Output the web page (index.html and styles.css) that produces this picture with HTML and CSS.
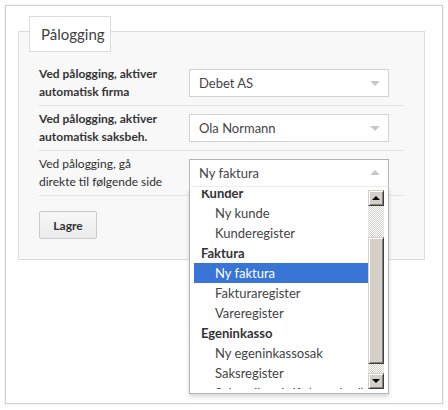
FILE: index.html
```html
<!DOCTYPE html>
<html lang="no">
<head>
<meta charset="utf-8">
<title>Pålogging</title>
<link rel="stylesheet" href="styles.css">
</head>
<body>
<div class="panel">
  <div class="fieldset">
    <div class="legend">Pålogging</div>
    <div class="rows">
      <div class="row">
        <div class="label bold">Ved pålogging, aktiver<br>automatisk firma</div>
        <div class="select"><span class="value">Debet AS</span><i class="arrow down"></i></div>
      </div>
      <div class="row">
        <div class="label bold">Ved pålogging, aktiver<br>automatisk saksbeh.</div>
        <div class="select"><span class="value">Ola Normann</span><i class="arrow down"></i></div>
      </div>
      <div class="row">
        <div class="label">Ved pålogging, gå<br>direkte til følgende side</div>
        <div class="select-wrap">
          <div class="select open"><span class="value">Ny faktura</span><i class="arrow up"></i></div>
          <div class="drop">
            <div class="results">
              <div class="viewport">
                <ul class="list">
                  <li class="group">Kunder</li>
                  <li class="option">Ny kunde</li>
                  <li class="option">Kunderegister</li>
                  <li class="group">Faktura</li>
                  <li class="option active">Ny faktura</li>
                  <li class="option">Fakturaregister</li>
                  <li class="option">Vareregister</li>
                  <li class="group">Egeninkasso</li>
                  <li class="option">Ny egeninkassosak</li>
                  <li class="option">Saksregister</li>
                  <li class="option">Saker til utskrift (standard)</li>
                </ul>
              </div>
              <div class="scrollbar">
                <div class="sb-btn"><i class="sb-arrow up"></i></div>
                <div class="sb-track top"></div>
                <div class="sb-thumb"></div>
                <div class="sb-track bottom"></div>
                <div class="sb-btn"><i class="sb-arrow down"></i></div>
              </div>
            </div>
          </div>
        </div>
      </div>
    </div>
    <div class="actions"><button class="btn" type="button">Lagre</button></div>
  </div>
</div>
</body>
</html>
```
FILE: styles.css
```css
* { box-sizing: border-box; }
html, body { margin: 0; padding: 0; background: #fff; }
body {
  font-family: Lato, "Open Sans", "DejaVu Sans", sans-serif;
  color: #333;
}
.panel {
  margin: 5px;
  width: 438px;
  height: 399px;
  border: 1px solid #cfcfcf;
  box-shadow: 0 0 2px rgba(0, 0, 0, 0.12);
  background: #fff;
  padding: 25px 17px 0 12px;
}
.fieldset {
  width: 407px;
  height: 229px;
  border: 1px solid #dcdcdc;
  background: #f8f8f8;
}
.legend {
  display: inline-flex;
  align-items: center;
  margin: -16px 0 0 10px;
  width: 82px;
  height: 36px;
  border: 1px solid #dcdcdc;
  background: #fff;
  padding-left: 11px;
  font-size: 15px;
  color: #3f3f3f;
  vertical-align: top;
}
.rows {
  margin: 9px 20px 0 20px;
}
.row {
  display: flex;
  align-items: center;
  height: 45px;
  border-bottom: 1px solid #e4e4e4;
}
.label {
  width: 150px;
  flex: none;
  font-size: 12px;
  line-height: 18px;
  color: #2e2e2e;
}
.label.bold { font-weight: bold; color: #343434; }
.select {
  width: 200px;
  height: 28px;
  border: 1px solid #d2d2d2;
  background: #fff;
  display: flex;
  align-items: center;
  justify-content: space-between;
  padding: 0 8px 0 9px;
  font-size: 13px;
  color: #444;
}
.arrow {
  width: 0;
  height: 0;
  border-left: 5px solid transparent;
  border-right: 5px solid transparent;
}
.arrow.down { border-top: 5px solid #c8c8c8; margin-top: 1px; }
.arrow.up { border-bottom: 5px solid #c8c8c8; margin-top: -1px; }
.select-wrap {
  position: relative;
  width: 200px;
  height: 28px;
}
.select.open {
  border-color: #b4b4b4;
  border-bottom-color: #eeeeee;
}
.drop {
  position: absolute;
  top: 28px;
  left: 0;
  width: 200px;
  border: 1px solid #b4b4b4;
  border-top: none;
  background: #fff;
  padding: 3px 4px 4px 4px;
  box-shadow: 0 3px 4px rgba(0, 0, 0, 0.15);
  z-index: 10;
}
.results {
  display: flex;
  height: 199px;
}
.viewport {
  width: 174px;
  height: 199px;
  overflow: hidden;
}
.list {
  list-style: none;
  margin: -7px 0 0 0;
  padding: 0;
}
.list li {
  height: 20px;
  line-height: 20px;
  font-size: 13px;
  white-space: nowrap;
  color: #444;
}
.list .group {
  font-weight: bold;
  color: #333;
  padding-left: 7px;
}
.list .option { padding-left: 21px; }
.list .active { background: #3875d7; color: #fff; }
.scrollbar {
  width: 16px;
  display: flex;
  flex-direction: column;
}
.sb-btn, .sb-thumb {
  background: #d4d0c8;
  border: 1px solid;
  border-color: #d4d0c8 #404040 #404040 #d4d0c8;
  box-shadow: inset 1px 1px #fff, inset -1px -1px #808080;
}
.sb-btn {
  height: 16px;
  display: flex;
  align-items: center;
  justify-content: center;
}
.sb-arrow {
  width: 0;
  height: 0;
  border-left: 4px solid transparent;
  border-right: 4px solid transparent;
}
.sb-arrow.up { border-bottom: 4px solid #000; }
.sb-arrow.down { border-top: 4px solid #000; }
.sb-track {
  background: repeating-conic-gradient(#d4d0c8 0 25%, #ffffff 0 50%) 0 0 / 2px 2px;
}
.sb-track.top { height: 31px; }
.sb-thumb { height: 127px; }
.sb-track.bottom { flex: 1; }
.actions {
  padding: 15px 20px 0 20px;
}
.btn {
  width: 58px;
  height: 28px;
  border: 1px solid #cacaca;
  border-radius: 2px;
  background: linear-gradient(#f7f7f7, #ebebeb);
  font-family: inherit;
  font-size: 12px;
  font-weight: bold;
  color: #333;
  padding: 0;
}
```
